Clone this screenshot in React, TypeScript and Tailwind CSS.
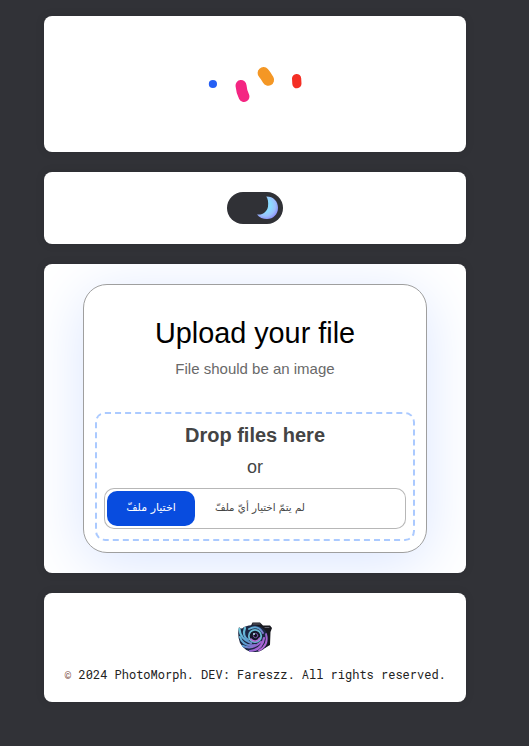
function Loader() {
  return (
    <svg className="block h-24 w-24" viewBox="207 36 96 96" fill="none" strokeLinecap="round">
      <path d="M212.9 84v.01" stroke="#255ff4" strokeWidth="8.2" />
      <path d="M241 85.5Q241.600 92 244 96.500" stroke="#f42582" strokeWidth="11" />
      <path d="M263.500 73Q265.800 75.500 268.200 79.800" stroke="#f49725" strokeWidth="11.800" />
      <path d="M296.600 78.500L296.900 83.700" stroke="#f42f25" strokeWidth="9.200" />
    </svg>
  );
}

function ThemeToggle() {
  return (
    <button aria-label="Theme" className="flex h-8 w-14 items-center justify-end rounded-full bg-[#303136] pr-1">
      <svg className="h-6 w-6" viewBox="0 0 24 24">
        <defs>
          <radialGradient id="moon" cx="0.4" cy="0.4" r="0.68">
            <stop offset="0.4" stopColor="#8cdaff" />
            <stop offset="0.7" stopColor="#9bc0fb" />
            <stop offset="1" stopColor="#8983f7" />
          </radialGradient>
        </defs>
        <path d="M11.300 .6C18 .4 23 5.300 23 11.800C23 18.500 18.200 23 12 23C8 23 4.200 21.400 2 18.400C7.500 19.400 12.200 15.700 13 10.500C13.500 6.500 13 3 11.300 .6Z" fill="url(#moon)" />
      </svg>
    </button>
  );
}

function CameraLogo() {
  return (
    <svg className="h-9 w-9" viewBox="-1 -1 36 36" fill="none" strokeLinecap="round">
      <defs>
        <linearGradient id="swirl" x1="2" y1="4" x2="30" y2="28" gradientUnits="userSpaceOnUse">
          <stop stopColor="#72d0dc" />
          <stop offset="0.45" stopColor="#5b9bd0" />
          <stop offset="0.7" stopColor="#9a63d0" />
          <stop offset="1" stopColor="#c968dc" />
        </linearGradient>
      </defs>
      <path d="M9 7L13 4.500L14.500 1.500L22 1.500L25 4.500L32 4.500L34 7L32.500 11L32 24L27 27L12 24Z" fill="#18181f" />
      <path d="M15 3L22 3M27 6.500L31 6.500" stroke="#62636e" strokeWidth="1" />
      <path d="M1 6Q3 9 6 6Q10 4 17 4Q25 5 29 12Q32 19 28 26Q23 31.500 16 31Q7 31 2 22Q-1 14 1 6Z" fill="#1b2744" />
      <g stroke="url(#swirl)">
        <path d="M1.500 8Q2 18 13 22" strokeWidth="2.200" />
        <path d="M7 7Q4 15 10 19" strokeWidth="2.200" />
        <path d="M2 16Q5 26 17 24" strokeWidth="2" />
        <path d="M5 25Q14 29 23 21" strokeWidth="2.200" />
        <path d="M12 30Q24 29 26 17" strokeWidth="2.200" />
        <path d="M21 29.500Q31 24 28 13" strokeWidth="1.800" />
        <path d="M11 8Q20 3 25 12" strokeWidth="1.800" />
      </g>
      <circle cx="17" cy="15" r="6.200" fill="#151829" stroke="#6bb8d2" strokeWidth="1.800" />
      <path d="M13 18A5 5 0 0 0 21.500 17" stroke="#b76bd5" strokeWidth="1.500" />
      <circle cx="17.500" cy="14.500" r="2.200" fill="#11111b" stroke="#7756a2" />
      <circle cx="16" cy="13" r="1" fill="#b5e3ed" />
    </svg>
  );
}

const card = "flex flex-col items-center rounded-lg bg-white shadow-[0_0_10px_rgba(0,0,0,0.1)] overflow-hidden";

export default function App() {
  return (
    <main className="flex min-h-screen flex-col gap-5 bg-[#313237] pt-4 pr-[63px] pl-11 font-['Liberation_Sans',Arial,sans-serif]">
      <section className={`${card} h-[136px] pt-5`}>
        <Loader />
      </section>
      <section className={`${card} h-[72px] pt-5`}>
        <ThemeToggle />
      </section>
      <section className={`${card} h-[309px] pt-5`}>
        <form className="flex h-[269px] w-[344px] flex-col rounded-3xl border border-[#9f9f9f] bg-white px-[11px] pt-8 text-center text-lg shadow-[0_10px_60px_rgb(218,229,255)]">
          <h1 className="text-[28.8px] leading-[33px] font-normal text-black">Upload your file</h1>
          <p className="mt-[10px] text-[15px] leading-[17px] text-[#696969]">File should be an image</p>
          <label className="mt-[35px] flex h-[129px] flex-col items-center rounded-[10px] border-2 border-dashed border-[#abcaff] bg-white px-[7px] pt-[10px] text-[#444]">
            <span className="text-xl leading-[23px] font-bold">Drop files here</span>
            <span className="mt-[10px] leading-[21px]">or</span>
            <span className="mt-[10px] flex h-[41px] w-[302px] shrink-0 items-center rounded-[10px] border border-[#080808]/29 bg-white p-[2px] font-['DejaVu_Sans',sans-serif] text-[11px]">
              <span dir="rtl" className="flex h-[35px] w-[88px] items-center justify-center rounded-[10px] bg-[#084cdf] pb-[2px] whitespace-nowrap text-white">اختيار ملفّ</span>
              <span dir="rtl" className="ml-5 pb-[2px] text-[10.3px] whitespace-nowrap">لم يتمّ اختيار أيّ ملفّ</span>
            </span>
          </label>
        </form>
      </section>
      <footer className={`${card} h-[109px] pt-[27px]`}>
        <CameraLogo />
        <p className="mt-[10px] font-['Roboto_Mono','DejaVu_Sans_Mono',monospace] text-[12px] leading-4 whitespace-nowrap text-[#222]"><span className="text-[#76483c]">©</span> 2024 PhotoMorph. DEV: Fareszz. All rights reserved.</p>
      </footer>
    </main>
  );
}
